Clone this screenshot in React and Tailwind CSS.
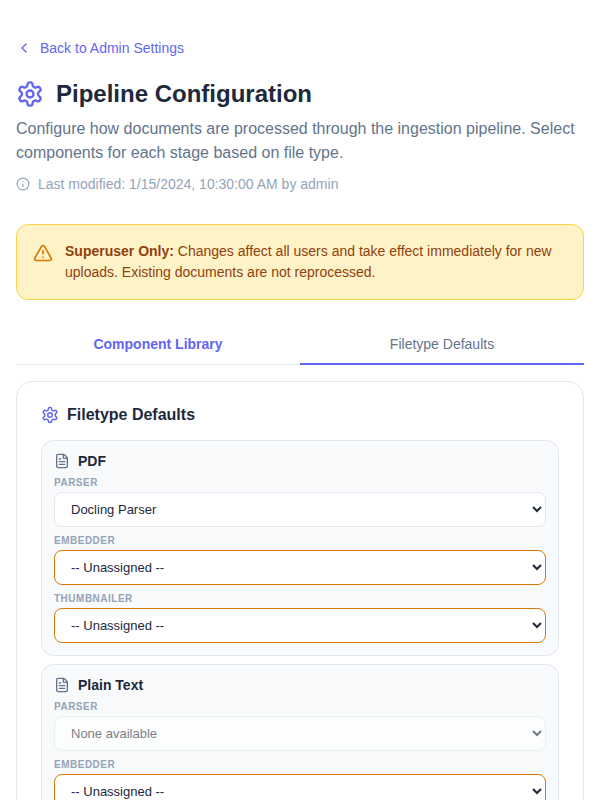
import React from "react";
import { ChevronLeft, FileText, Info, TriangleAlert } from "lucide-react";

const filetypes = [
  {
    name: "PDF",
    stages: [
      { label: "Parser", value: "Docling Parser" },
      { label: "Embedder", value: "-- Unassigned --", warn: true },
      { label: "Thumbnailer", value: "-- Unassigned --", warn: true },
    ],
  },
  {
    name: "Plain Text",
    stages: [
      { label: "Parser", value: "None available", disabled: true },
      { label: "Embedder", value: "-- Unassigned --", warn: true },
      { label: "Thumbnailer", value: "-- Unassigned --", warn: true },
    ],
  },
];

// rounder six-lobed gear, the current lucide Settings has a different outline
const Gear = ({ size, className }) => (
  <svg
    width={size}
    height={size}
    viewBox="0 0 24 24"
    fill="none"
    stroke="currentColor"
    strokeWidth="2"
    strokeLinecap="round"
    strokeLinejoin="round"
    className={className}
  >
    <path d="M12.22 2h-.44a2 2 0 0 0-2 2v.18a2 2 0 0 1-1 1.73l-.43.25a2 2 0 0 1-2 0l-.15-.08a2 2 0 0 0-2.73.73l-.22.38a2 2 0 0 0 .73 2.73l.15.1a2 2 0 0 1 1 1.72v.51a2 2 0 0 1-1 1.74l-.15.09a2 2 0 0 0-.73 2.73l.22.38a2 2 0 0 0 2.73.73l.15-.08a2 2 0 0 1 2 0l.43.25a2 2 0 0 1 1 1.73V20a2 2 0 0 0 2 2h.44a2 2 0 0 0 2-2v-.18a2 2 0 0 1 1-1.73l.43-.25a2 2 0 0 1 2 0l.15.08a2 2 0 0 0 2.73-.73l.22-.39a2 2 0 0 0-.73-2.73l-.15-.08a2 2 0 0 1-1-1.74v-.5a2 2 0 0 1 1-1.74l.15-.09a2 2 0 0 0 .73-2.73l-.22-.38a2 2 0 0 0-2.73-.73l-.15.08a2 2 0 0 1-2 0l-.43-.25a2 2 0 0 1-1-1.73V4a2 2 0 0 0-2-2z" />
    <circle cx="12" cy="12" r="3" />
  </svg>
);

const StageSelect = ({ label, value, warn, disabled }) => (
  <div className="mb-[8px]">
    <label className="mb-[3px] block h-[12px] text-[10px] leading-[12px] font-semibold tracking-[0.5px] text-[#94a3b8] uppercase">
      {label}
    </label>
    <select
      disabled={disabled}
      defaultValue={value}
      className={`block h-[35px] w-full rounded-lg border bg-white px-3 py-2 text-[13px] text-[#1e293b] ${
        warn ? "border-[#d97706]" : "border-[#e2e8f0]"
      } ${disabled ? "opacity-60" : ""}`}
    >
      <option className={disabled ? "text-[#646b78]" : ""}>{value}</option>
    </select>
  </div>
);

const FiletypeCard = ({ name, stages }) => (
  <div className="mb-2 rounded-xl border border-[#e2e8f0] bg-[#f8fafc] px-3 pt-3 pb-[4px]">
    <div className="mb-[8px] flex h-[16px] items-center gap-2">
      <FileText size={16} className="text-[#64748b]" />
      <span className="text-sm font-semibold text-[#1e293b]">{name}</span>
    </div>
    {stages.map((s) => (
      <StageSelect key={s.label} {...s} />
    ))}
  </div>
);

export default function App() {
  return (
    <div className="h-[800px] overflow-hidden bg-white px-4 pt-[39px] font-['Liberation_Sans',Arial,sans-serif]">
      <a className="flex h-[18px] items-center gap-2 text-sm text-[#6366f1]">
        <ChevronLeft size={16} />
        Back to Admin Settings
      </a>

      <div className="mt-[21px] flex h-[32px] items-center gap-3">
        <Gear size={28} className="text-[#6366f1]" />
        <h1 className="text-2xl font-bold text-[#1e293b]">Pipeline Configuration</h1>
      </div>
      <p className="mt-[7px] text-base leading-6 text-[#64748b]">
        Configure how documents are processed through the ingestion pipeline. Select components for
        each stage based on file type.
      </p>
      <div className="mt-[9px] flex h-[20px] items-center gap-2 text-sm text-[#94a3b8]">
        <Info size={14} />
        Last modified: 1/15/2024, 10:30:00 AM by admin
      </div>

      <div className="mt-[30px] flex h-[76px] gap-3 rounded-xl border border-[#fcd34d] bg-[#fef3c7] px-4 pt-[16px]">
        <TriangleAlert size={20} className="mt-[2px] shrink-0 text-[#d97706]" />
        <p className="text-sm leading-[21px] text-[#92400e]">
          <strong className="font-bold">Superuser Only:</strong> Changes affect all users and take
          effect immediately for new uploads. Existing documents are not reprocessed.
        </p>
      </div>

      <div className="mt-6 flex border-b border-[#e2e8f0]">
        <button className="h-[40px] w-1/2 text-sm font-semibold text-[#6366f1]">Component Library</button>
        <button className="-mb-px h-[41px] w-1/2 border-b-2 border-[#6366f1] text-sm text-[#64748b]">
          Filetype Defaults
        </button>
      </div>

      <div className="mt-4 rounded-2xl border border-[#e2e8f0] bg-white px-6 pt-6">
        <div className="mb-4 flex h-[18px] items-center gap-2">
          <Gear size={18} className="text-[#6366f1]" />
          <h2 className="text-base font-bold text-[#1e293b]">Filetype Defaults</h2>
        </div>
        {filetypes.map((f) => (
          <FiletypeCard key={f.name} {...f} />
        ))}
      </div>
    </div>
  );
}
